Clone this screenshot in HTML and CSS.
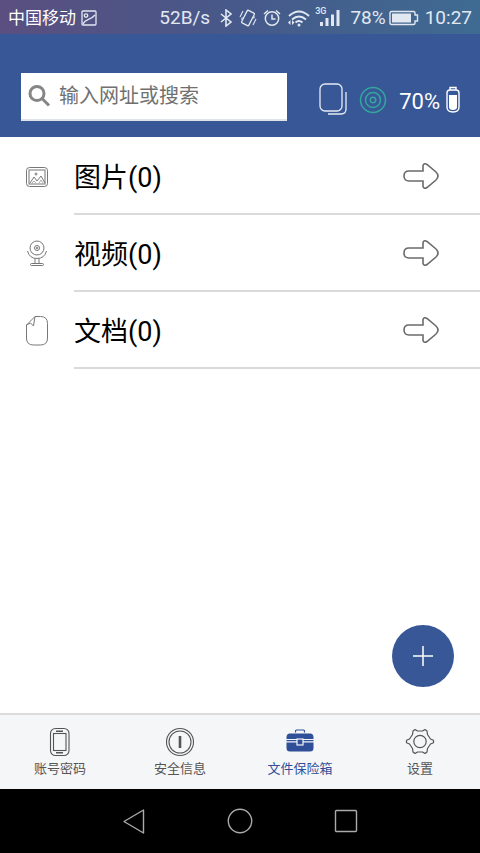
FILE: index.html
```html
<!DOCTYPE html>
<html lang="zh-CN">
<head>
<meta charset="utf-8">
<meta name="viewport" content="width=device-width, initial-scale=1">
<title>文件保险箱</title>
<link rel="stylesheet" href="styles.css">
</head>
<body>
<div class="status">
  <span class="carrier">中国移动</span>
  <svg width="16" height="16" viewBox="0 0 16 16" fill="none" stroke="currentColor" stroke-width="1.3"><rect x="1" y="1" width="14" height="14" rx="1"/><circle cx="5" cy="5.500" r="1.700"/><path d="M2 14C5 8 9 11 14 5"/></svg>
  <div class="status-right">
    <span class="speed">52B/s</span>
    <svg width="14" height="18" viewBox="0 0 14 18" fill="none" stroke="currentColor" stroke-width="1.600"><path d="M2 5l10 8-5 4V1l5 4-10 8"/></svg>
    <svg width="18" height="18" viewBox="0 0 18 18" fill="none" stroke="currentColor" stroke-width="1.300"><rect x="5" y="2" width="8" height="14" rx="1" transform="rotate(27 9 9)"/><path d="M1 8l3-6M2.500 10.500l1-2M17 10l-3 6M15.500 7.500l-1 2" stroke-width="1.100"/></svg>
    <svg width="18" height="18" viewBox="0 0 18 18" fill="none" stroke="currentColor" stroke-width="1.500"><circle cx="9" cy="9.500" r="6.700"/><path d="M9 5.500v4.500h3.500M1 5l4-3.500M17 5l-4-3.500"/></svg>
    <svg width="24" height="18" viewBox="0 0 24 18" fill="none" stroke="currentColor" stroke-width="2"><path d="M2 7q10-9 20 0M5 10.500q7-6 14 0M8.500 13.500q3.500-3 7 0"/><circle cx="12" cy="16" r="1.500" fill="currentColor" stroke="none"/><path d="M3.500 11v5L1 13.500zM5 11v5l2.500-2.500z" fill="currentColor" stroke="none"/></svg>
    <span class="signal"><span class="network">3G</span><svg width="20" height="18" viewBox="0 0 20 18" fill="currentColor"><path d="M0 13h3v4H0zM5.500 9h3v8h-3zM11 5.500h3V17h-3zM16.500 1h3v16h-3z"/></svg></span>
    <span class="percent">78%</span>
    <svg class="battery" width="30" height="16" viewBox="0 0 30 16"><path d="M2.500 1.500h22q1.500 0 1.500 1.500v2h2.500v6H26v2q0 1.500-1.500 1.500h-22Q1 14.500 1 13V3q0-1.500 1.500-1.500z" fill="none" stroke="currentColor" stroke-width="1.400"/><path d="M3 3.500h19v9H3z" fill="currentColor"/></svg>
    <span>10:27</span>
  </div>
</div>
<header class="header">
  <label class="search">
    <svg width="24" height="24" viewBox="0 0 24 24" fill="none" stroke="#858585" stroke-width="3"><circle cx="9" cy="9.500" r="7"/><path d="M14 14.500l7 7"/></svg>
    <input type="text" placeholder="输入网址或搜索" aria-label="输入网址或搜索">
  </label>
  <div class="tools">
    <button class="plain" aria-label="标签页"><svg width="28" height="34" viewBox="0 0 28 34" fill="none" stroke="#e6ebf5" stroke-width="1.300"><rect x="1" y="1" width="22" height="27" rx="5"/><path d="M27 9v17q0 5-5 5H9"/></svg></button>
    <button class="plain" aria-label="连接"><svg width="28" height="28" viewBox="0 0 28 28" fill="none" stroke="#35a69b" stroke-width="1.500"><circle cx="14" cy="14" r="12.500"/><circle cx="14" cy="14" r="7.500"/><circle cx="14" cy="14" r="2.700"/></svg></button>
    <div class="level"><span>70%</span><svg width="14" height="28" viewBox="0 0 14 28"><path d="M4 4V1.500h6V4M4 4h6q3 0 3 3v14q0 5-6 5t-6-5V7q0-3 3-3z" fill="none" stroke="#fff" stroke-width="1.400"/><path d="M3 9h8v12q0 3-4 3t-4-3z" fill="#fff"/></svg></div>
  </div>
</header>
<main class="content">
  <ul class="files">
    <li><a class="file" href="#images">
      <svg width="24" height="32" viewBox="0 0 24 32" fill="none" stroke="#777" stroke-width="1"><rect x="1.500" y="6.500" width="21" height="19" rx="3"/><rect x="4" y="9" width="16" height="14"/><path d="M5 22l4-6 3 4 4-5 4 7"/><path d="M7 22l2-2 2 2M14 22l2-3 2 3" stroke-width=".6"/><circle cx="11" cy="13" r="1"/></svg>
      <span class="file-body"><span class="name">图片(0)</span><svg width="38" height="28" viewBox="0 0 38 28"><path d="M7 9h14V3.500q1-3 4-1L34 10q4 4 0 8l-9 7.500q-3 2-4-1V19H7q-5 0-5-5t5-5z" fill="none" stroke="#6b6b6b" stroke-width="1.600"/></svg></span>
    </a></li>
    <li><a class="file" href="#videos">
      <svg width="24" height="32" viewBox="0 0 24 32" fill="none" stroke="#777" stroke-width="1"><circle cx="12" cy="10" r="7"/><circle cx="12" cy="10" r="2.500"/><circle cx="12" cy="10" r=".8"/><path d="M2.500 13q2 7.500 9.500 7.500t9.500-7.500M10 20.500v5M14 20.500v5"/><rect x="5.500" y="25.500" width="13" height="2" rx="1"/></svg>
      <span class="file-body"><span class="name">视频(0)</span><svg width="38" height="28" viewBox="0 0 38 28"><path d="M7 9h14V3.500q1-3 4-1L34 10q4 4 0 8l-9 7.500q-3 2-4-1V19H7q-5 0-5-5t5-5z" fill="none" stroke="#6b6b6b" stroke-width="1.600"/></svg></span>
    </a></li>
    <li><a class="file" href="#documents">
      <svg width="24" height="32" viewBox="0 0 24 32" fill="none" stroke="#777" stroke-width="1"><path d="M10 1.500h5.500q7 0 7 7v14.500q0 7-7 7h-7q-7 0-7-7V10zM10 1.500L8.500 11 5.500 8 1.500 10"/></svg>
      <span class="file-body"><span class="name">文档(0)</span><svg width="38" height="28" viewBox="0 0 38 28"><path d="M7 9h14V3.500q1-3 4-1L34 10q4 4 0 8l-9 7.500q-3 2-4-1V19H7q-5 0-5-5t5-5z" fill="none" stroke="#6b6b6b" stroke-width="1.600"/></svg></span>
    </a></li>
  </ul>
  <button class="add" aria-label="添加"><svg width="22" height="22" viewBox="0 0 22 22" stroke="#fff" stroke-width="1.500"><path d="M11 1v20M1 11h20"/></svg></button>
</main>
<nav class="tabs">
  <a class="tab" href="#accounts"><svg width="30" height="30" viewBox="0 0 30 30" fill="none" stroke="currentColor" stroke-width="1.100"><rect x="5.500" y="1.500" width="18.500" height="27" rx="5"/><rect x="8.500" y="6.500" width="12.500" height="17"/><path d="M11 4.300h7M11 25.700h7" stroke-width="1.400"/></svg><span>账号密码</span></a>
  <a class="tab" href="#security"><svg width="30" height="30" viewBox="0 0 30 30" fill="none" stroke="currentColor" stroke-width="1.100"><circle cx="15" cy="15" r="13.500"/><circle cx="15" cy="15" r="11"/><path d="M15 9v12" stroke-width="2.600"/></svg><span>安全信息</span></a>
  <a class="tab active" href="#vault" aria-current="page"><svg width="30" height="30" viewBox="0 0 30 30"><path d="M10.500 5.500V4q0-1 1-1h7q1 0 1 1v1.500" fill="none" stroke="currentColor" stroke-width="1.200"/><path d="M5 6.500h20q3.500 0 3.500 4V12h-27v-1.500q0-4 3.500-4zM1.500 13h27v1.200h-27zM1.500 15.500h27V21q0 3.500-3.500 3.500H5q-3.500 0-3.500-3.500z" fill="currentColor"/><rect x="12" y="12" width="6" height="6" fill="currentColor" stroke="#f5f6f8" stroke-width="1.200"/></svg><span>文件保险箱</span></a>
  <a class="tab" href="#settings"><svg width="30" height="30" viewBox="0 0 30 30" fill="none" stroke="currentColor" stroke-width="1.200" stroke-linejoin="round"><path d="M8 4l2-1.500 2.500 1.500h5L20 2.500 22 4l.5 3.500 3 4.500 3 1.200v2.600L25.500 17l-3 4.500L22 25l-2 1.500-2.500-1.500h-5L10 26.500 8 25l-.5-3.500-3-4.500-3-1.200v-2.600l3-1.200 3-4.500z"/><circle cx="15" cy="14.500" r="6.200"/></svg><span>设置</span></a>
</nav>
<div class="system">
  <button class="plain" aria-label="返回"><svg width="26" height="26" viewBox="0 0 26 26" fill="none" stroke="#aaa" stroke-width="1.400" stroke-linejoin="round"><path d="M22.500 2v23L3 13.500z"/></svg></button>
  <button class="plain" aria-label="主页"><svg width="26" height="26" viewBox="0 0 26 26" fill="none" stroke="#aaa" stroke-width="1.400"><circle cx="13" cy="13" r="11.700"/></svg></button>
  <button class="plain" aria-label="最近任务"><svg width="26" height="26" viewBox="0 0 26 26" fill="none" stroke="#aaa" stroke-width="1.400"><rect x="2.500" y="2.500" width="21" height="21" rx="1"/></svg></button>
</div>
</body>
</html>
```
FILE: styles.css
```css
* { box-sizing: border-box; }
body {
  margin: 0;
  min-height: 100vh;
  display: flex;
  flex-direction: column;
  background: #fff;
  color: #000;
  font-family: Roboto, "Noto Sans CJK SC", sans-serif;
}
svg { display: block; flex: none; }
a { color: inherit; text-decoration: none; }
button { font: inherit; cursor: pointer; }
.plain { display: block; padding: 0; border: 0; background: none; }

.status {
  display: flex;
  align-items: center;
  gap: 5px;
  height: 34px;
  padding: 1px 8px 0;
  background: linear-gradient(90deg, #5a4f80, #46598a 50%, #3f6b92);
  color: #e2e8f2;
  font-size: 19px;
  line-height: 24px;
}
.carrier { font-size: 17px; color: #fff; }
.status-right { display: flex; align-items: center; gap: 6px; margin-left: auto; }
.speed { margin-right: 3px; }
.signal { display: flex; align-items: center; margin-left: -2px; }
.network { align-self: flex-start; margin: -2px -6px 0 0; font-size: 9px; line-height: 9px; font-weight: 500; }
.percent { margin-left: 4px; }
.battery { margin-left: -3px; }

.header {
  display: flex;
  align-items: center;
  gap: 32px;
  padding: 39px 20px 16px 21px;
  background: #385797;
}
.search {
  display: flex;
  align-items: center;
  gap: 7px;
  flex: 1;
  min-width: 0;
  height: 48px;
  padding: 0 7px;
  background: #fff;
  border-bottom: 2px solid #dfe3ea;
}
.search input {
  flex: 1;
  min-width: 0;
  padding: 0;
  border: 0;
  outline: 0;
  background: none;
  font: 20px/30px Roboto, "Noto Sans CJK SC", sans-serif;
}
.search input::placeholder { color: #707070; opacity: 1; }
.tools { display: flex; align-items: center; gap: 12px; margin-top: 6px; }
.level { display: flex; align-items: center; gap: 6px; color: #fff; font-size: 22px; line-height: 28px; }
.level span { padding-top: 3px; }

.content { position: relative; flex: 1; }
.files { margin: 0; padding: 1px 0 0; list-style: none; }
.file { display: flex; align-items: center; gap: 25px; padding-left: 25px; }
.file-body {
  display: flex;
  align-items: center;
  justify-content: space-between;
  flex: 1;
  padding: 18px 40px 18px 0;
  border-bottom: 2px solid #dadada;
  font-size: 27px;
  line-height: 33px;
}
.name { padding-top: 6px; }
.add {
  position: absolute;
  right: 26px;
  bottom: 26px;
  display: grid;
  place-items: center;
  width: 62px;
  height: 62px;
  padding: 0;
  border: 0;
  border-radius: 50%;
  background: #385797;
}

.tabs {
  display: grid;
  grid-template-columns: repeat(4, 1fr);
  border-top: 2px solid #dcdcdd;
  background: #f5f6f8;
}
.tab {
  display: flex;
  flex-direction: column;
  align-items: center;
  gap: 2px;
  padding: 12px 0 10px;
  color: #555;
  font-size: 13px;
  line-height: 20px;
}
.active { color: #2f4f98; }

.system {
  display: flex;
  justify-content: center;
  align-items: center;
  gap: 80px;
  height: 64px;
  background: #000;
}
```
